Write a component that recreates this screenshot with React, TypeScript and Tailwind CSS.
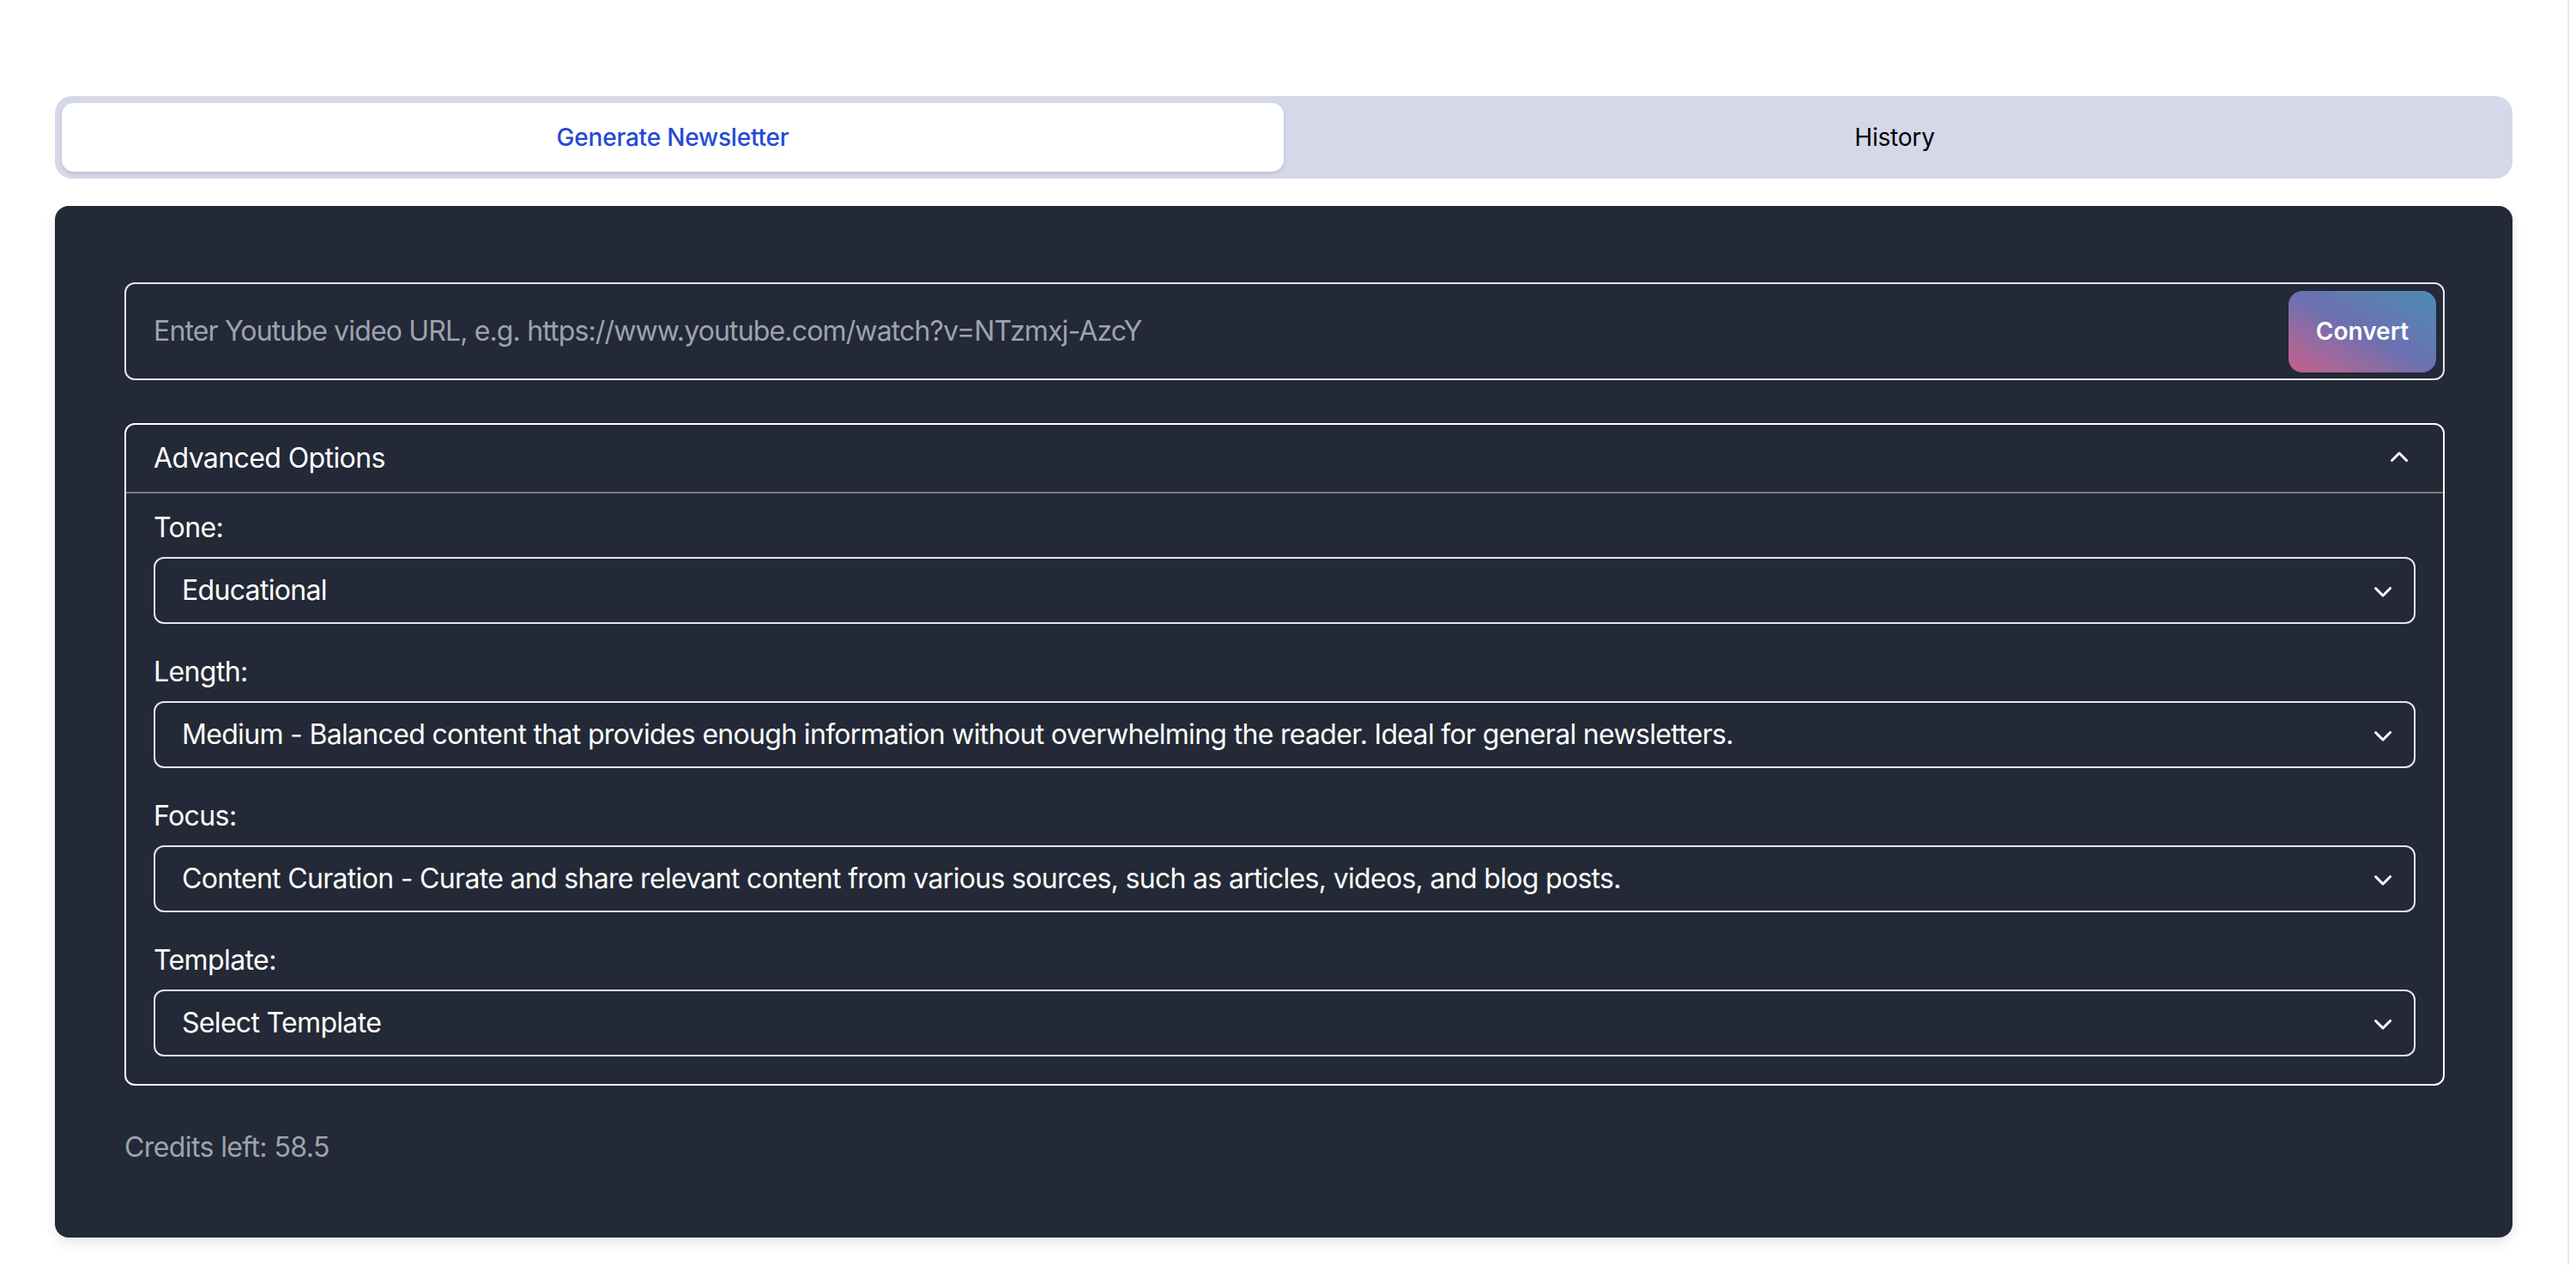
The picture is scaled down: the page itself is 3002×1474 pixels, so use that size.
import React from "react";

function ChevronDown({ className = "" }: { className?: string }) {
  return (
    <svg viewBox="0 0 20 20" fill="currentColor" className={className} aria-hidden="true">
      <path
        fillRule="evenodd"
        d="M5.22 8.22a.75.75 0 0 1 1.06 0L10 11.94l3.72-3.72a.75.75 0 1 1 1.06 1.06l-4.25 4.25a.75.75 0 0 1-1.06 0L5.22 9.28a.75.75 0 0 1 0-1.06Z"
        clipRule="evenodd"
      />
    </svg>
  );
}

function ChevronUp({ className = "" }: { className?: string }) {
  return (
    <svg viewBox="0 0 20 20" fill="currentColor" className={className} aria-hidden="true">
      <path
        fillRule="evenodd"
        d="M9.47 6.47a.75.75 0 0 1 1.06 0l4.25 4.25a.75.75 0 1 1-1.06 1.06L10 8.06l-3.72 3.72a.75.75 0 0 1-1.06-1.06l4.25-4.25Z"
        clipRule="evenodd"
      />
    </svg>
  );
}

function SelectField({ label, value }: { label: string; value: string }) {
  return (
    <div className="flex flex-col">
      <div className="h-[48px] text-[32px] leading-[48px] tracking-[-0.6px] text-white mb-[10px]">{label}</div>
      <div className="h-[78px] border-2 border-[#e5e7eb] rounded-[12px] flex items-center justify-between pl-[31px] pr-[16px]">
        <span className="text-[32px] leading-[48px] tracking-[-0.68px] text-white whitespace-nowrap">{value}</span>
        <ChevronDown className="w-[40px] h-[40px] text-white shrink-0" />
      </div>
    </div>
  );
}

export default function App() {
  return (
    <div className="w-[3002px] h-[1474px] bg-white flex font-['Inter',_'Noto_Sans',_sans-serif] overflow-hidden">
      <div className="w-[2992px] px-[64px] pt-[112px]">
        {/* Tabs */}
        <div className="h-[96px] rounded-[20px] bg-[#d5d8e8] p-[8px] flex">
          <div className="flex-1 rounded-[14px] bg-white shadow-[0_2px_4px_rgba(0,0,0,0.12)] flex items-center justify-center">
            <span className="text-[28px] font-medium text-[#2449d6] tracking-[-0.2px]">Generate Newsletter</span>
          </div>
          <div className="flex-1 rounded-[14px] flex items-center justify-center">
            <span className="text-[28px] text-black tracking-[-0.2px]">History</span>
          </div>
        </div>

        {/* Card */}
        <div className="mt-[32px] rounded-[16px] bg-[#232936] pl-[81px] pr-[79px] pt-[89px] pb-[81px] shadow-[0_6px_14px_rgba(0,0,0,0.10)]">
          {/* URL input */}
          <div className="h-[114px] border-2 border-[#e5e7eb] rounded-[12px] flex items-center justify-between pl-[32px] pr-[8px]">
            <span className="text-[32px] tracking-[-0.85px] text-[#9ca3af] whitespace-nowrap">
              Enter Youtube video URL, e.g. https://www.youtube.com/watch?v=NTzmxj-AzcY
            </span>
            <button className="h-[95px] w-[172px] rounded-[16px] bg-gradient-to-tr from-[#c65d89] via-[#6a70b0] to-[#4a8cb4] text-white text-[28px] font-semibold">
              Convert
            </button>
          </div>

          {/* Advanced options */}
          <div className="mt-[50px] border-2 border-white rounded-[12px]">
            <div className="h-[80px] border-b-2 border-[#7b7b7b] flex items-center justify-between pl-[32px] pr-[31px]">
              <span className="text-[32px] tracking-[-0.6px] text-white">Advanced Options</span>
              <ChevronUp className="w-[40px] h-[40px] text-white" />
            </div>
            <div className="pt-[16px] px-[32px] pb-[32px] flex flex-col gap-[32px]">
              <SelectField label="Tone:" value="Educational" />
              <SelectField
                label="Length:"
                value="Medium - Balanced content that provides enough information without overwhelming the reader. Ideal for general newsletters."
              />
              <SelectField
                label="Focus:"
                value="Content Curation - Curate and share relevant content from various sources, such as articles, videos, and blog posts."
              />
              <SelectField label="Template:" value="Select Template" />
            </div>
          </div>

          <div className="mt-[48px] text-[32px] leading-[48px] tracking-[-0.6px] text-[#9ca3af]">Credits left: 58.5</div>
        </div>
      </div>
      <div className="w-[2px] h-full bg-[#e8e8e8]" />
      <div className="flex-1 h-full bg-white" />
    </div>
  );
}
